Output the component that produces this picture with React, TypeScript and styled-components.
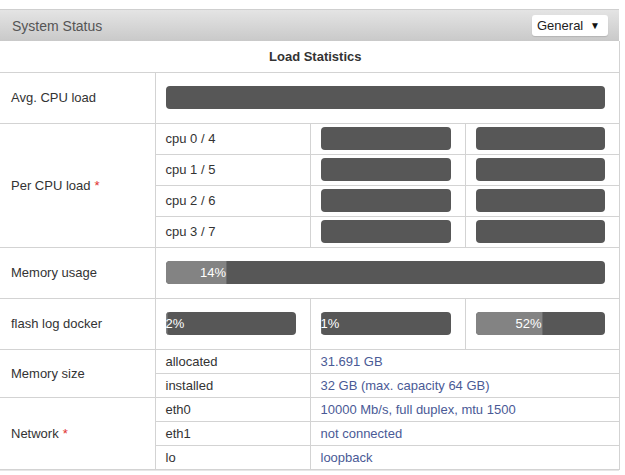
import React from "react";
import styled, { createGlobalStyle } from "styled-components";

const GlobalStyle = createGlobalStyle`
  html, body {
    margin: 0;
    padding: 0;
    background: #fff;
  }
  body {
    font-family: "Liberation Sans", Arial, sans-serif;
    font-size: 13px;
    color: #333;
  }
`;

const Panel = styled.div`
  width: 619px;
  margin-top: 9px;
  border-top: 1px solid #cfcfcf;
  border-bottom: 1px solid #e6e6e6;
  box-sizing: border-box;
`;

const Header = styled.div`
  height: 31px;
  display: flex;
  align-items: center;
  justify-content: space-between;
  padding: 0 11px 0 12px;
  background: linear-gradient(to bottom, #e4e4e4, #c9c9c9);
`;

const Title = styled.span`
  font-size: 14px;
  color: #555;
`;

const Select = styled.div`
  width: 76px;
  height: 21px;
  box-sizing: border-box;
  display: flex;
  align-items: center;
  justify-content: space-between;
  padding: 0 8px 0 5px;
  background: #fff;
  border-radius: 3px;
  box-shadow: 0 1px 1px rgba(0, 0, 0, 0.12);
  font-size: 13px;
  color: #222;
`;

const Caret = styled.span`
  font-size: 10px;
  color: #111;
`;

const Table = styled.table`
  width: 619px;
  border-collapse: collapse;
  table-layout: fixed;
`;

const Row = styled.tr<{ $h: number }>`
  height: ${(p) => p.$h}px;
`;

const Caption = styled.th`
  padding: 0 0 0 12px;
  font-weight: bold;
  font-size: 13px;
  line-height: 15px;
  color: #333;
  text-align: center;
  border-bottom: 1px solid #d3d3d3;
  border-right: 1px solid #d3d3d3;
`;

const Cell = styled.td`
  padding: 0 14px 0 10px;
  line-height: 15px;
  border: 1px solid #d3d3d3;
  border-left: none;
  vertical-align: middle;
  white-space: nowrap;
  overflow: hidden;
`;

const Label = styled(Cell)`
  color: #333;
`;

const RowLabel = styled(Label)`
  padding-left: 11px;
`;

const Value = styled(Cell)`
  color: #4a5a96;
`;

const Star = styled.span`
  color: #e03030;
  margin-left: 4px;
`;

const Bar = styled.div`
  height: 23px;
  background: #575757;
  border-radius: 4px;
  overflow: hidden;
  display: flex;
`;

const Fill = styled.div`
  height: 23px;
  background: #838383;
  border-right: 1px solid #6a6a6a;
  color: #fff;
  font-size: 13px;
  line-height: 23px;
  text-align: right;
  white-space: nowrap;
  box-sizing: border-box;
`;

const Progress = ({ pct }: { pct?: number }) => (
  <Bar>
    {pct !== undefined && (
      <Fill style={{ width: `${pct}%` }}>{pct}%</Fill>
    )}
  </Bar>
);

const cpus = ["cpu 0 / 4", "cpu 1 / 5", "cpu 2 / 6", "cpu 3 / 7"];

const nets = [
  ["eth0", "10000 Mb/s, full duplex, mtu 1500"],
  ["eth1", "not connected"],
  ["lo", "loopback"],
];

export default function App() {
  return (
    <>
      <GlobalStyle />
      <Panel>
        <Header>
          <Title>System Status</Title>
          <Select>
            General <Caret>▼</Caret>
          </Select>
        </Header>
        <Table>
          <colgroup>
            <col style={{ width: 155 }} />
            <col style={{ width: 155 }} />
            <col style={{ width: 155 }} />
            <col style={{ width: 154 }} />
          </colgroup>
          <tbody>
            <Row $h={31}>
              <Caption colSpan={4}>Load Statistics</Caption>
            </Row>
            <Row $h={51}>
              <RowLabel>Avg. CPU load</RowLabel>
              <Cell colSpan={3}>
                <Progress />
              </Cell>
            </Row>
            {cpus.map((c, i) => (
              <Row $h={31} key={c}>
                {i === 0 && (
                  <RowLabel rowSpan={4}>
                    Per CPU load<Star>*</Star>
                  </RowLabel>
                )}
                <Label>{c}</Label>
                <Cell>
                  <Progress />
                </Cell>
                <Cell>
                  <Progress />
                </Cell>
              </Row>
            ))}
            <Row $h={51}>
              <RowLabel>Memory usage</RowLabel>
              <Cell colSpan={3}>
                <Progress pct={14} />
              </Cell>
            </Row>
            <Row $h={51}>
              <RowLabel>flash log docker</RowLabel>
              <Cell>
                <Progress pct={2} />
              </Cell>
              <Cell>
                <Progress pct={1} />
              </Cell>
              <Cell>
                <Progress pct={52} />
              </Cell>
            </Row>
            <Row $h={24}>
              <RowLabel rowSpan={2}>Memory size</RowLabel>
              <Label>allocated</Label>
              <Value colSpan={2}>31.691 GB</Value>
            </Row>
            <Row $h={24}>
              <Label>installed</Label>
              <Value colSpan={2}>32 GB (max. capacity 64 GB)</Value>
            </Row>
            {nets.map(([k, v], i) => (
              <Row $h={24} key={k}>
                {i === 0 && (
                  <RowLabel rowSpan={3}>
                    Network<Star>*</Star>
                  </RowLabel>
                )}
                <Label>{k}</Label>
                <Value colSpan={2}>{v}</Value>
              </Row>
            ))}
          </tbody>
        </Table>
      </Panel>
    </>
  );
}
